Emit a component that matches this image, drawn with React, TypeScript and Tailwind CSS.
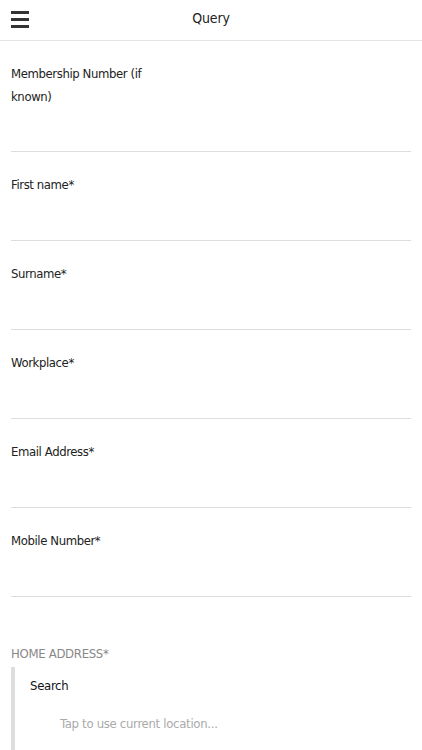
import React from 'react';

const font = { fontFamily: '"DejaVu Sans Condensed", "Roboto", sans-serif' };

const fields = ['First name*', 'Surname*', 'Workplace*', 'Email Address*', 'Mobile Number*'];

function Field({ label, first }: { label: string; first?: boolean }) {
	return (
		<div className={`mx-[11px] border-b border-[#dddddd] pt-[21px] ${first ? 'pb-[43px]' : 'pb-[44px]'}`}>
			<div className="max-w-[150px] text-[13px] leading-[23px] tracking-[-0.4px] text-[#222]">{label}</div>
		</div>
	);
}

export default function App() {
	return (
		<div className="min-h-[750px] w-full overflow-hidden bg-white" style={font}>
			<header className="relative flex h-[41px] items-center justify-center border-b border-[#e4e4e4] pb-[3px]">
				<button className="absolute left-[11px] top-[11px] flex h-[17px] w-[18px] flex-col justify-between">
					<span className="block h-[3px] w-full bg-[#333]" />
					<span className="block h-[3px] w-full bg-[#333]" />
					<span className="block h-[3px] w-full bg-[#333]" />
				</button>
				<h1 className="text-[14px] tracking-[-0.2px] text-[#222]">Query</h1>
			</header>

			<Field label="Membership Number (if known)" first />
			{fields.map((f) => (
				<Field key={f} label={f} />
			))}

			<div className="px-[11px] pt-[47px]">
				<div className="text-[13px] leading-[20px] tracking-[-0.3px] text-[#888]">HOME ADDRESS*</div>
				<div className="mt-[3px] border-l-[4px] border-[#dddddd] pl-[15px]">
					<div className="pt-[9px] text-[13px] leading-[20px] tracking-[-0.3px] text-[#111]">Search</div>
					<div className="pl-[30px] pt-[18px] pb-[20px] text-[13px] leading-[20px] tracking-[-0.3px] text-[#aaa]">
						Tap to use current location...
					</div>
				</div>
			</div>
		</div>
	);
}
